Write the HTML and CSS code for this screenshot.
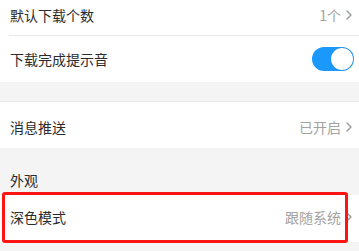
FILE: index.html
```html
<!DOCTYPE html>
<html lang="zh-CN">
<head>
<meta charset="utf-8">
<link rel="stylesheet" href="styles.css">
</head>
<body>
<div class="page">
  <div class="group">
    <div class="row row-first">
      <span class="label">默认下载个数</span>
      <span class="value">1个<svg class="chev" viewBox="0 0 6 10" width="6" height="10"><path d="M1 1l4 4-4 4" fill="none" stroke="#999" stroke-width="1.4" stroke-linecap="round" stroke-linejoin="round"/></svg></span>
    </div>
    <div class="row row-second">
      <span class="label">下载完成提示音</span>
      <span class="toggle"><span class="knob"></span></span>
    </div>
  </div>
  <div class="spacer"></div>
  <div class="group">
    <div class="row row-third">
      <span class="label">消息推送</span>
      <span class="value">已开启<svg class="chev" viewBox="0 0 6 10" width="6" height="10"><path d="M1 1l4 4-4 4" fill="none" stroke="#999" stroke-width="1.4" stroke-linecap="round" stroke-linejoin="round"/></svg></span>
    </div>
  </div>
  <div class="section-title">外观</div>
  <div class="group highlighted">
    <div class="row row-fourth">
      <span class="label">深色模式</span>
      <span class="value">跟随系统<svg class="chev" viewBox="0 0 6 10" width="6" height="10"><path d="M1 1l4 4-4 4" fill="none" stroke="#999" stroke-width="1.4" stroke-linecap="round" stroke-linejoin="round"/></svg></span>
    </div>
    <div class="annotation"></div>
  </div>
</div>
</body>
</html>
```
FILE: styles.css
```css
* { box-sizing: border-box; }
html, body {
  margin: 0;
  padding: 0;
  background: #f4f4f4;
  font-family: "Noto Sans CJK SC", "Noto Sans", sans-serif;
}
.page {
  width: 359px;
  height: 251px;
  overflow: hidden;
  background: #f4f4f4;
}
.group {
  background: #fff;
  position: relative;
}
.row {
  display: flex;
  align-items: center;
  justify-content: space-between;
  padding: 0 7px 0 10px;
  position: relative;
}
.row-first {
  height: 36px;
  padding-bottom: 6px;
}
.row-first::after {
  content: "";
  position: absolute;
  left: 9px;
  right: 0;
  bottom: 0;
  height: 1px;
  background: #e8e8e8;
}
.row-second {
  height: 46px;
  padding-right: 5px;
}
.row-third {
  height: 46px;
  padding-top: 4px;
}
.row-fourth {
  height: 47px;
  padding-bottom: 4px;
}
.label {
  font-size: 14px;
  color: #2b2b2b;
  line-height: 20px;
}
.value {
  display: flex;
  align-items: center;
  font-size: 14px;
  color: #a3a3a3;
  line-height: 20px;
}
.chev {
  margin-left: 5px;
  display: block;
}
.toggle {
  width: 42px;
  height: 24px;
  border-radius: 12px;
  background: #1a98fb;
  position: relative;
  display: block;
}
.knob {
  position: absolute;
  right: 1px;
  top: 1px;
  width: 22px;
  height: 22px;
  border-radius: 50%;
  background: #fff;
  box-shadow: 0 0 1px rgba(0,0,0,0.25);
}
.spacer {
  height: 20px;
  border-bottom: 1px solid #ebebeb;
}
.section-title {
  height: 47px;
  padding: 22px 0 0 10px;
  font-size: 14px;
  line-height: 20px;
  color: #2b2b2b;
}
.annotation {
  position: absolute;
  left: 2px;
  top: -3px;
  width: 346px;
  height: 51px;
  border: 3px solid #ff1414;
  border-radius: 3px;
}
```
